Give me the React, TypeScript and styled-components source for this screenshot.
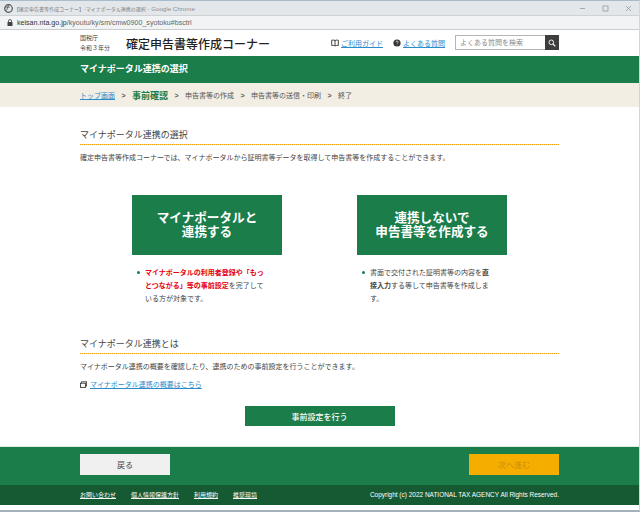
import styled, { createGlobalStyle } from 'styled-components';

const GlobalStyle = createGlobalStyle`
  html, body {
    margin: 0;
    padding: 0;
    width: 640px;
    height: 512px;
    overflow: hidden;
    background: #ffffff;
    font-family: "Noto Sans CJK JP", "Liberation Sans", sans-serif;
    color: #444444;
  }
`;

const Page = styled.div`
  width: 640px;
  height: 512px;
  display: flex;
  flex-direction: column;
  overflow: hidden;
  box-sizing: border-box;
  border-top: 1px solid #a9bccb;
  border-bottom: 2px solid #a7afbb;
  border-right: 1px solid #cfd6dc;
`;

const TitleBar = styled.div`
  height: 14px;
  flex: none;
  background: #e4e7ea;
  display: flex;
  align-items: center;
  padding: 0 7px 0 4px;
  gap: 1px;
`;

const TitleText = styled.div`
  flex: 1;
  font-size: 5px;
  color: #777c81;
  white-space: nowrap;
`;

const TitleSuffix = styled.span`
  font-family: "Liberation Sans", sans-serif;
  font-size: 6.2px;
  color: #8a8f94;
`;

const WindowControls = styled.div`
  display: flex;
  align-items: center;
  gap: 16px;
`;

const AddressBar = styled.div`
  height: 15px;
  flex: none;
  box-sizing: border-box;
  background: #f1f3f4;
  border-top: 1px solid #cfd2d5;
  border-bottom: 1px solid #c9cccf;
  display: flex;
  align-items: center;
  padding-left: 7px;
  gap: 4px;
  font-family: "Liberation Sans", sans-serif;
  font-size: 7.1px;
  color: #666666;
`;

const Host = styled.span`
  color: #333333;
`;

const Header = styled.header`
  height: 26px;
  flex: none;
  display: flex;
  align-items: center;
  padding: 0 80px;
`;

const Agency = styled.div`
  font-size: 6px;
  line-height: 10px;
  color: #444444;
  width: 46px;
`;

const SiteTitle = styled.div`
  font-size: 12px;
  font-weight: 500;
  color: #222222;
  flex: 1;
  white-space: nowrap;
`;

const HeaderLink = styled.a`
  display: flex;
  align-items: center;
  gap: 2px;
  font-size: 7px;
  color: #2b8ccc;
  text-decoration: underline;
  white-space: nowrap;
  margin-right: 10px;
`;

const SearchBox = styled.div`
  display: flex;
  height: 15px;
  margin-bottom: 1px;
`;

const SearchInput = styled.div`
  width: 90px;
  box-sizing: border-box;
  border: 1px solid #b5b5b5;
  border-right: none;
  font-size: 7px;
  line-height: 13px;
  padding-left: 4px;
  color: #8a8a8a;
  white-space: nowrap;
`;

const SearchButton = styled.div`
  width: 14px;
  background: #3d3d3d;
  display: flex;
  align-items: center;
  justify-content: center;
`;

const GreenBand = styled.div`
  height: 27px;
  flex: none;
  box-sizing: border-box;
  background: #1a7d4a;
  display: flex;
  align-items: center;
  padding: 0 80px 2px;
  font-size: 9px;
  font-weight: 700;
  color: #ffffff;
`;

const Breadcrumb = styled.nav`
  height: 24px;
  flex: none;
  background: #f2eee3;
  display: flex;
  align-items: center;
  padding: 0 80px;
  font-size: 7px;
  color: #555555;
  white-space: nowrap;
`;

const CrumbLink = styled.a`
  color: #2b8ccc;
  text-decoration: underline;
`;

const CrumbSep = styled.span`
  width: 17px;
  text-align: center;
  font-family: "Liberation Sans", sans-serif;
  font-size: 7px;
  font-weight: 700;
  color: #555555;
`;

const CrumbCurrent = styled.span`
  font-size: 9px;
  font-weight: 700;
  color: #1a7d4a;
`;

const Main = styled.main`
  flex: 1 1 auto;
  padding: 19px 80px 0;
  min-height: 0;
`;

const SectionTitle = styled.h2`
  margin: 0;
  height: 19px;
  font-size: 9px;
  font-weight: 400;
  line-height: 17px;
  color: #444444;
  background: linear-gradient(to right, #f2a20c 50%, #fbd184 50%) left bottom / 2px 1px repeat-x;
`;

const Lead = styled.p`
  margin: 0;
  font-size: 7px;
  line-height: 11px;
  padding-top: 7px;
  color: #444444;
  white-space: nowrap;
`;

const Choices = styled.div`
  display: flex;
  justify-content: center;
  gap: 75px;
  margin-top: 32px;
`;

const Choice = styled.div`
  width: 150px;
`;

const ChoiceButton = styled.div`
  height: 60px;
  box-sizing: border-box;
  padding-bottom: 2px;
  background: #1a7d4a;
  color: #ffffff;
  font-size: 12.6px;
  font-weight: 700;
  line-height: 14.5px;
  text-align: center;
  display: flex;
  align-items: center;
  justify-content: center;
  white-space: pre-line;
`;

const Note = styled.ul`
  margin: 11px 0 0;
  padding: 0 12px 0 13px;
  list-style: none;
  position: relative;
  font-size: 7px;
  line-height: 13px;
  color: #444444;
  &::before {
    content: '';
    position: absolute;
    left: 4.5px;
    top: 5px;
    width: 3px;
    height: 3px;
    border-radius: 50%;
    background: #1a7d4a;
  }
`;

const Em = styled.strong<{ $red?: boolean }>`
  font-weight: 700;
  color: ${(p) => (p.$red ? '#e60012' : '#444444')};
`;

const SecondSection = styled.section`
  margin-top: 30px;
`;

const OutLink = styled.div`
  display: flex;
  align-items: center;
  gap: 3px;
  margin-top: 7px;
  font-size: 7px;
  line-height: 11px;
  a {
    color: #2b8ccc;
    text-decoration: underline;
  }
`;

const SetupRow = styled.div`
  display: flex;
  justify-content: center;
  margin-top: 16px;
`;

const SetupButton = styled.div`
  width: 150px;
  height: 20px;
  background: #1a7d4a;
  color: #ffffff;
  font-size: 8px;
  font-weight: 500;
  display: flex;
  align-items: center;
  justify-content: center;
`;

const ActionBar = styled.div`
  height: 39px;
  flex: none;
  background: #1a7d4a;
  border-top: 1px solid #dfe9e3;
  box-sizing: border-box;
  display: flex;
  align-items: flex-start;
  justify-content: space-between;
  padding: 7px 80px 0;
`;

const NavButton = styled.div<{ $next?: boolean }>`
  width: 90px;
  height: 21px;
  box-sizing: border-box;
  background: ${(p) => (p.$next ? '#f5ae00' : '#f0f0f0')};
  color: ${(p) => (p.$next ? '#c98f10' : '#444444')};
  font-size: 8px;
  display: flex;
  align-items: center;
  justify-content: center;
`;

const FooterBar = styled.footer`
  height: 20px;
  flex: none;
  box-sizing: border-box;
  background: #165a34;
  display: flex;
  align-items: center;
  justify-content: space-between;
  padding: 0 80px 1px;
  color: #ffffff;
`;

const FooterLinks = styled.div`
  display: flex;
  gap: 15px;
  font-size: 6px;
  a {
    color: #ffffff;
    text-decoration: underline;
  }
`;

const Copyright = styled.div`
  font-family: "Liberation Sans", sans-serif;
  font-size: 6.47px;
  white-space: nowrap;
`;

const BottomGap = styled.div`
  flex: none;
  height: 5px;
  background: #ffffff;
`;

function App() {
  return (
    <>
      <GlobalStyle />
      <Page>
        <TitleBar>
          <svg width="9" height="9" viewBox="0 0 10 10">
            <circle cx="5" cy="5" r="4.2" fill="none" stroke="#555" strokeWidth="1.4" />
            <path d="M1.5 3.5h5M5 1l-2 6" stroke="#555" strokeWidth="0.9" fill="none" />
          </svg>
          <TitleText>
            【確定申告書等作成コーナー】-マイナポータル連携の選択<TitleSuffix> - Google Chrome</TitleSuffix>
          </TitleText>
          <WindowControls>
            <svg width="7" height="7" viewBox="0 0 7 7">
              <path d="M1 3.5h5" stroke="#999" strokeWidth="0.8" />
            </svg>
            <svg width="7" height="7" viewBox="0 0 7 7">
              <rect x="1" y="1" width="5" height="5" fill="none" stroke="#999" strokeWidth="0.8" />
            </svg>
            <svg width="7" height="7" viewBox="0 0 7 7">
              <path d="M1 1l5 5M6 1l-5 5" stroke="#999" strokeWidth="0.8" />
            </svg>
          </WindowControls>
        </TitleBar>
        <AddressBar>
          <svg width="6" height="7" viewBox="0 0 6 7">
            <rect x="0.5" y="3" width="5" height="4" fill="#444" />
            <path d="M1.5 3V2a1.5 1.5 0 0 1 3 0v1" fill="none" stroke="#444" strokeWidth="0.8" />
          </svg>
          <span>
            <Host>keisan.nta.go.jp</Host>/kyoutu/ky/sm/cmw0900_syotoku#bsctrl
          </span>
        </AddressBar>
        <Header>
          <Agency>
            国税庁
            <br />
            令和３年分
          </Agency>
          <SiteTitle>確定申告書等作成コーナー</SiteTitle>
          <HeaderLink>
            <svg width="8" height="8" viewBox="0 0 8 8">
              <path d="M4 1.5C3 1 2 1 .7 1.2v5.3C2 6.3 3 6.3 4 6.9c1-.6 2-.6 3.3-.4V1.2C6 1 5 1 4 1.5zM4 1.5v5.4" fill="none" stroke="#333" strokeWidth="0.9" />
            </svg>
            ご利用ガイド
          </HeaderLink>
          <HeaderLink>
            <svg width="8" height="8" viewBox="0 0 8 8">
              <circle cx="4" cy="4" r="3.6" fill="#333" />
              <path d="M2.9 3.1a1.1 1.1 0 1 1 1.6 1c-.4.2-.5.4-.5.7" fill="none" stroke="#fff" strokeWidth="0.7" />
              <circle cx="4" cy="5.9" r="0.45" fill="#fff" />
            </svg>
            よくある質問
          </HeaderLink>
          <SearchBox>
            <SearchInput>よくある質問を検索</SearchInput>
            <SearchButton>
              <svg width="8" height="8" viewBox="0 0 8 8">
                <circle cx="3.3" cy="3.3" r="2.3" fill="none" stroke="#fff" strokeWidth="0.9" />
                <path d="M5 5l2.3 2.3" stroke="#fff" strokeWidth="1.1" />
              </svg>
            </SearchButton>
          </SearchBox>
        </Header>
        <GreenBand>マイナポータル連携の選択</GreenBand>
        <Breadcrumb>
          <CrumbLink>トップ画面</CrumbLink>
          <CrumbSep>&gt;</CrumbSep>
          <CrumbCurrent>事前確認</CrumbCurrent>
          <CrumbSep>&gt;</CrumbSep>
          <span>申告書等の作成</span>
          <CrumbSep>&gt;</CrumbSep>
          <span>申告書等の送信・印刷</span>
          <CrumbSep>&gt;</CrumbSep>
          <span>終了</span>
        </Breadcrumb>
        <Main>
          <SectionTitle>マイナポータル連携の選択</SectionTitle>
          <Lead>確定申告書等作成コーナーでは、マイナポータルから証明書等データを取得して申告書等を作成することができます。</Lead>
          <Choices>
            <Choice>
              <ChoiceButton>{'マイナポータルと\n連携する'}</ChoiceButton>
              <Note>
                <li>
                  <Em $red>マイナポータルの利用者登録や「もっとつながる」等の事前設定</Em>を完了している方が対象です。
                </li>
              </Note>
            </Choice>
            <Choice>
              <ChoiceButton>{'連携しないで\n申告書等を作成する'}</ChoiceButton>
              <Note>
                <li>
                  書面で交付された証明書等の内容を<Em>直接入力</Em>する等して申告書等を作成します。
                </li>
              </Note>
            </Choice>
          </Choices>
          <SecondSection>
            <SectionTitle>マイナポータル連携とは</SectionTitle>
            <Lead>マイナポータル連携の概要を確認したり、連携のための事前設定を行うことができます。</Lead>
            <OutLink>
              <svg width="7" height="7" viewBox="0 0 7 7">
                <rect x="1.6" y="0.8" width="5" height="4.2" fill="none" stroke="#333" strokeWidth="0.8" />
                <rect x="0.4" y="2.2" width="5" height="4.2" fill="#fff" stroke="#333" strokeWidth="0.9" />
              </svg>
              <a>マイナポータル連携の概要はこちら</a>
            </OutLink>
            <SetupRow>
              <SetupButton>事前設定を行う</SetupButton>
            </SetupRow>
          </SecondSection>
        </Main>
        <ActionBar>
          <NavButton>戻る</NavButton>
          <NavButton $next>次へ進む</NavButton>
        </ActionBar>
        <FooterBar>
          <FooterLinks>
            <a>お問い合わせ</a>
            <a>個人情報保護方針</a>
            <a>利用規約</a>
            <a>推奨環境</a>
          </FooterLinks>
          <Copyright>Copyright (c) 2022 NATIONAL TAX AGENCY All Rights Reserved.</Copyright>
        </FooterBar>
        <BottomGap />
      </Page>
    </>
  );
}

export default App;
